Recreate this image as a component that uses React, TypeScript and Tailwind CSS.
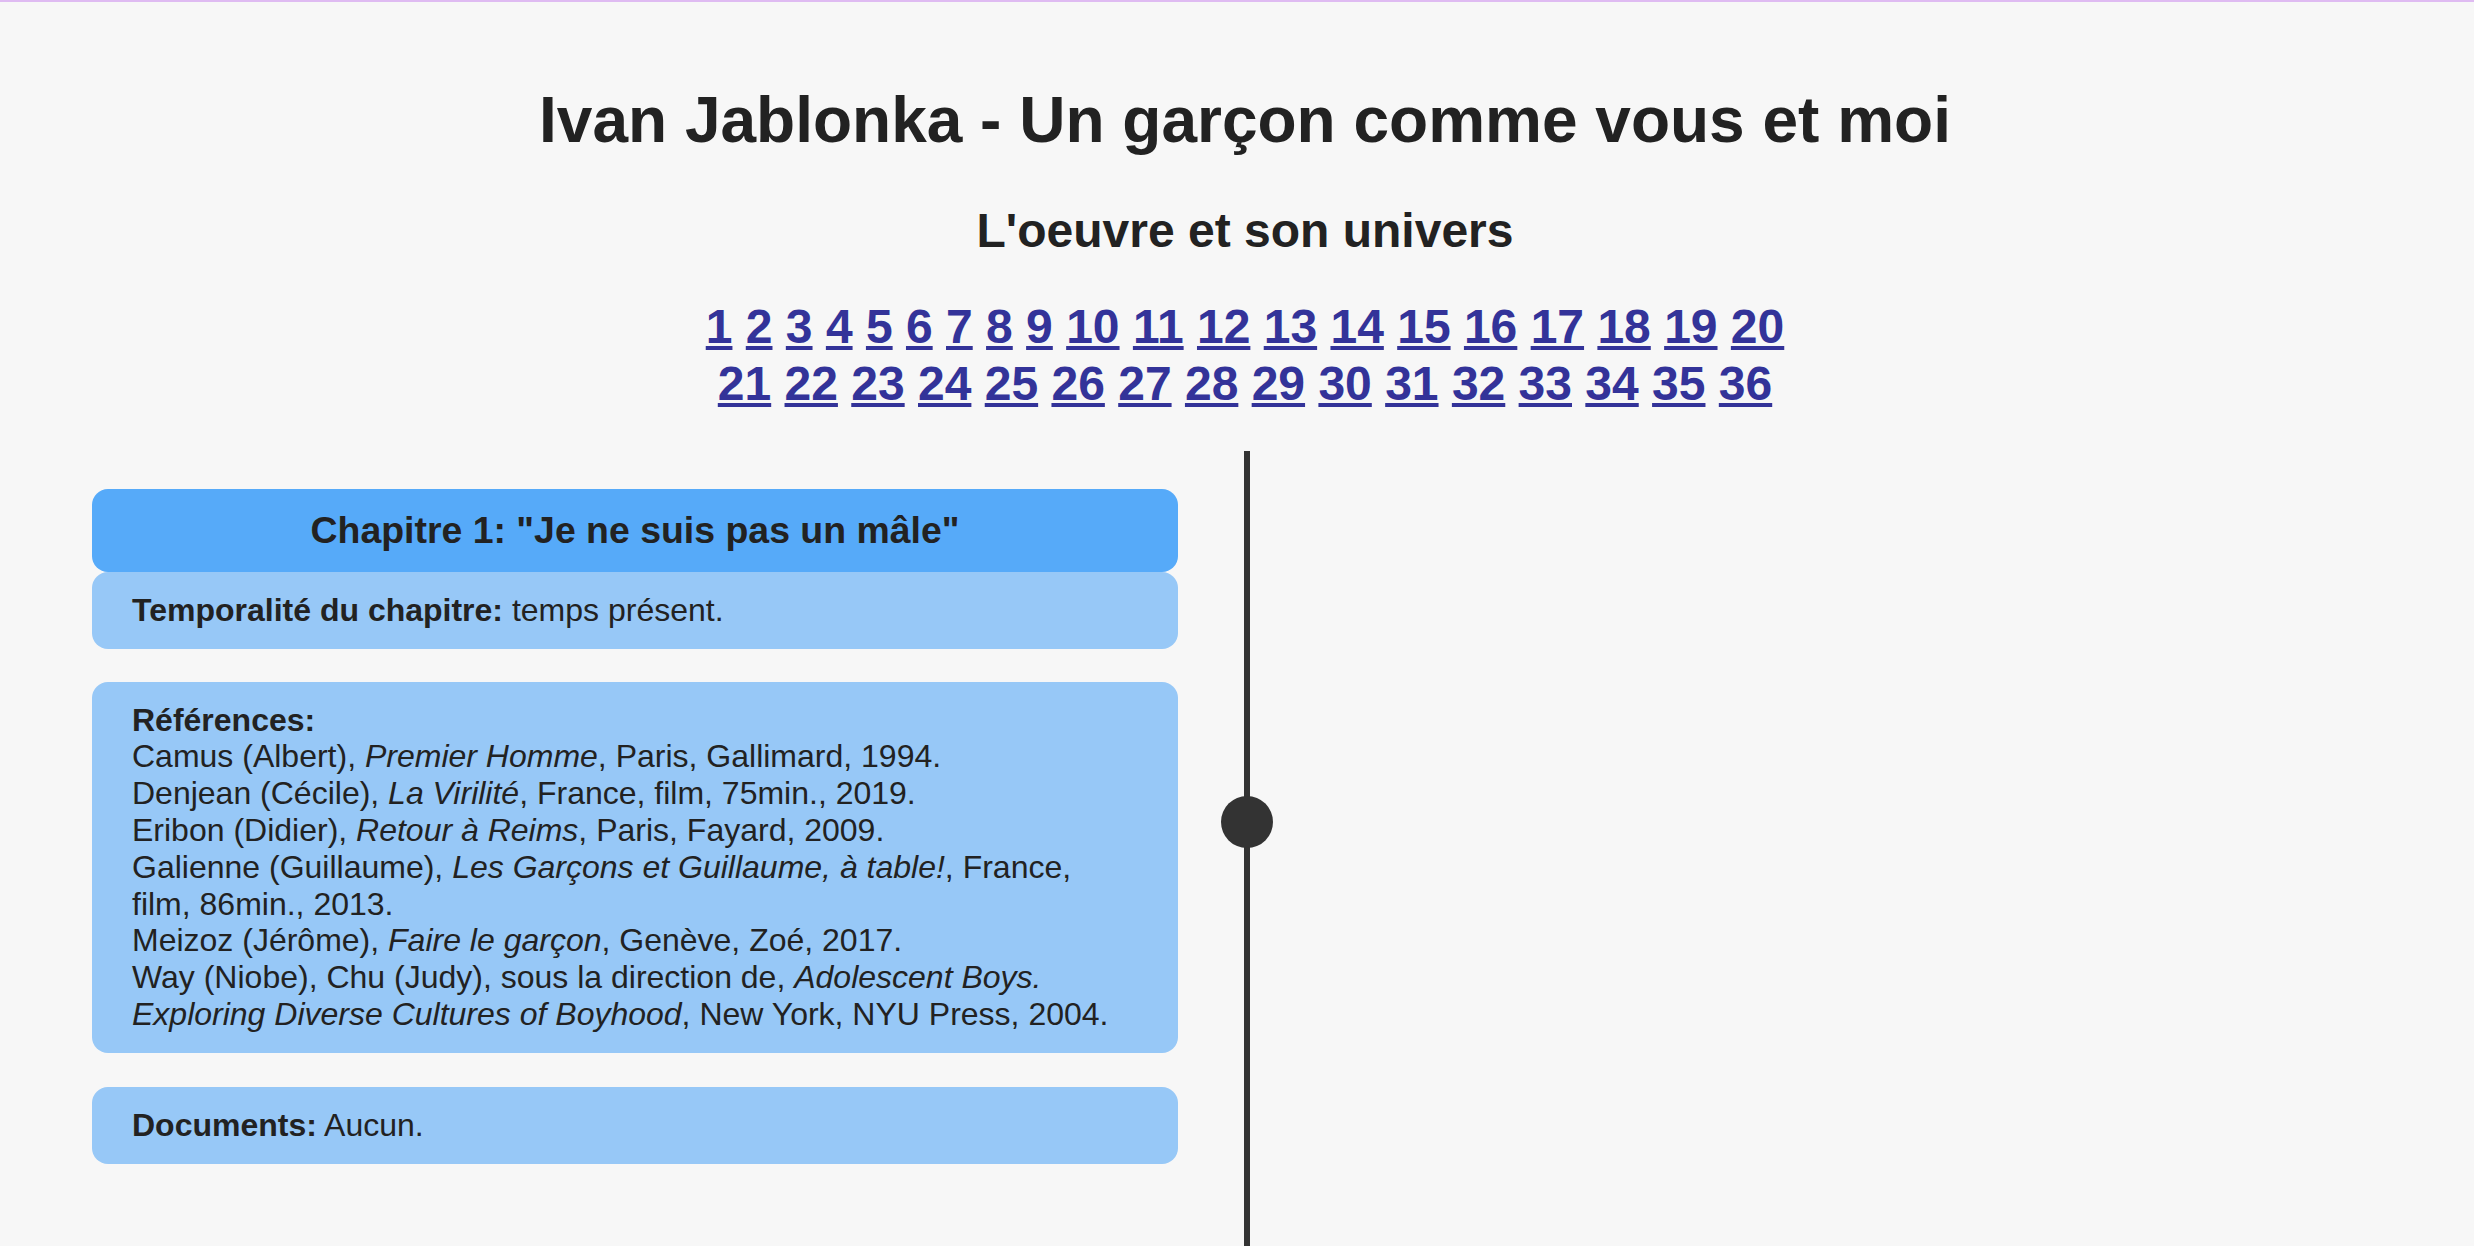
import React from "react";

const refs: React.ReactNode[] = [
  <>Camus (Albert), <em>Premier Homme</em>, Paris, Gallimard, 1994.</>,
  <>Denjean (Cécile), <em>La Virilité</em>, France, film, 75min., 2019.</>,
  <>Eribon (Didier), <em>Retour à Reims</em>, Paris, Fayard, 2009.</>,
  <>Galienne (Guillaume), <em>Les Garçons et Guillaume, à table!</em>, France, film, 86min., 2013.</>,
  <>Meizoz (Jérôme), <em>Faire le garçon</em>, Genève, Zoé, 2017.</>,
  <>Way (Niobe), Chu (Judy), sous la direction de, <em>Adolescent Boys. Exploring Diverse Cultures of Boyhood</em>, New York, NYU Press, 2004.</>,
];

function NavRow({ from, to }: { from: number; to: number }) {
  const items: React.ReactNode[] = [];
  for (let i = from; i <= to; i++) {
    items.push(
      <React.Fragment key={i}>
        <a href="#" className="text-[#333399] underline">{i}</a>
        {i < to ? " " : null}
      </React.Fragment>
    );
  }
  return <div>{items}</div>;
}

export default function App() {
  return (
    <div className="min-h-screen bg-[#f7f7f7] border-t-2 border-[#dfbbf2] text-[32px] leading-[36.8px] text-[#222222] font-['Liberation_Sans',Arial,sans-serif]">
      <div className="pl-[16px] text-center">
        <h1 className="pt-[82px] text-[64px] leading-[73.6px] font-bold">
          Ivan Jablonka - Un garçon comme vous et moi
        </h1>
        <h2 className="mt-[45px] text-[48px] leading-[55.2px] font-bold">
          L'oeuvre et son univers
        </h2>
        <nav className="mt-[40px] text-[48px] leading-[57px] font-bold">
          <NavRow from={1} to={20} />
          <NavRow from={21} to={36} />
        </nav>
      </div>
      <div className="mt-[39px] flex">
        <div className="w-[1244px] shrink-0 pl-[92px] pr-[66px] pt-[38px] pb-[140px]">
          <div className="rounded-[16px] bg-[#56aaf9] py-[20px] text-center text-[37.44px] leading-[43px] font-bold">
            Chapitre 1: "Je ne suis pas un mâle"
          </div>
          <div className="rounded-[16px] bg-[#97c8f7] px-[40px] py-[20px]">
            <strong>Temporalité du chapitre:</strong> temps présent.
          </div>
          <div className="mt-[33px] rounded-[16px] bg-[#97c8f7] px-[40px] py-[20px]">
            <div className="font-bold">Références:</div>
            {refs.map((r, i) => (
              <div key={i}>{r}</div>
            ))}
          </div>
          <div className="mt-[34px] rounded-[16px] bg-[#97c8f7] px-[40px] py-[20px]">
            <strong>Documents:</strong> Aucun.
          </div>
        </div>
        <div className="relative w-[6px] shrink-0 bg-[#333333]">
          <div className="absolute left-[-23px] top-[345px] h-[52px] w-[52px] rounded-full bg-[#333333]" />
        </div>
        <div className="flex-1" />
      </div>
    </div>
  );
}
